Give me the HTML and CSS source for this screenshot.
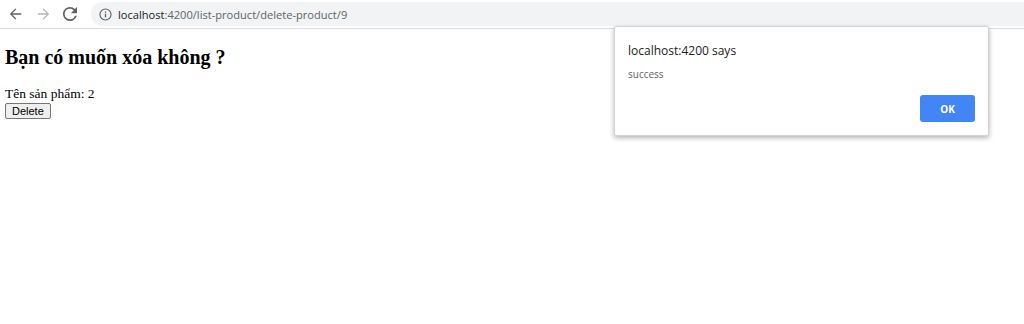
FILE: index.html
```html
<!DOCTYPE html>
<html lang="vi">
<head>
    <meta charset="UTF-8">
    <title>Delete product</title>
    <link rel="stylesheet" href="styles.css">
</head>
<body>
    <div class="toolbar">
        <span class="nav-btn">
            <svg width="14" height="14" viewBox="0 0 16 16"><path d="M14 7.2H3.9l4.5-4.5L7.3 1.6 1 8l6.3 6.4 1.1-1.1L3.9 8.8H14z" fill="#5f6368"/></svg>
        </span>
        <span class="nav-btn">
            <svg width="14" height="14" viewBox="0 0 16 16"><path d="M2 7.2h10.1L7.6 2.7l1.1-1.1L15 8l-6.3 6.4-1.1-1.1 4.5-4.5H2z" fill="#b4b7bb"/></svg>
        </span>
        <span class="nav-btn">
            <svg width="14" height="14" viewBox="0 0 16 16"><path d="M13.6 2.4A7.9 7.9 0 0 0 8 0a8 8 0 1 0 7.7 10h-2.1A6 6 0 1 1 8 2c1.7 0 3.1.7 4.2 1.8L9 7h7V0z" fill="#5f6368"/></svg>
        </span>
        <div class="omnibox">
            <svg width="13" height="13" viewBox="0 0 16 16"><circle cx="8" cy="8" r="6.8" fill="none" stroke="#5f6368" stroke-width="1.4"/><rect x="7.2" y="7" width="1.6" height="4.6" fill="#5f6368"/><rect x="7.2" y="4.2" width="1.6" height="1.6" fill="#5f6368"/></svg>
            <span class="url"><span class="host">localhost</span>:4200/list-product/delete-product/9</span>
        </div>
    </div>

    <div class="page">
        <h2 class="title">Bạn có muốn xóa không ?</h2>
        <div>Tên sản phẩm: 2</div>
        <button class="delete-btn">Delete</button>
    </div>

    <div class="dialog">
        <div class="dialog-title">localhost:4200 says</div>
        <div class="dialog-msg">success</div>
        <div class="dialog-actions">
            <button class="ok-btn">OK</button>
        </div>
    </div>
</body>
</html>
```

FILE: styles.css
```css
body {
    margin: 0;
    font-family: "Liberation Serif", serif;
    font-size: 13.5px;
    color: #000;
    background: #fff;
}
.toolbar {
    height: 29px;
    border-bottom: 1px solid #dadce0;
    display: flex;
    align-items: center;
    padding-left: 9px;
    box-sizing: border-box;
}
.nav-btn {
    width: 27px;
    display: flex;
    align-items: center;
    justify-content: flex-start;
}
.omnibox {
    flex: 1;
    height: 24px;
    margin-left: 1px;
    background: #f1f3f4;
    border-radius: 12px 0 0 12px;
    display: flex;
    align-items: center;
    padding-left: 8px;
    font-family: "Open Sans", sans-serif;
    font-size: 11.1px;
    color: #5f6368;
}
.url {
    margin-left: 6px;
}
.host {
    color: #202124;
}
.page {
    padding: 0 5px;
}
.title {
    font-size: 20px;
    margin: 17px 0 17px;
}
.delete-btn {
    font-family: "Liberation Sans", Arial, sans-serif;
    font-size: 11px;
    height: 16px;
    padding: 0 6px;
    margin: 1px 0 0;
    border: 1px solid #767676;
    border-radius: 2px;
    background: #efefef;
}
.dialog {
    position: absolute;
    left: 614px;
    top: 26px;
    width: 375px;
    height: 110px;
    box-sizing: border-box;
    background: #fff;
    border: 1px solid #d3d3d3;
    border-radius: 2px;
    box-shadow: 0 2px 5px rgba(0, 0, 0, 0.3);
    padding: 15px 13px 0 13px;
    font-family: "Open Sans", sans-serif;
}
.dialog-title {
    font-size: 12px;
    color: #202124;
}
.dialog-msg {
    font-size: 10px;
    color: #5f6368;
    margin-top: 8px;
}
.dialog-actions {
    display: flex;
    justify-content: flex-end;
    margin-top: 14px;
}
.ok-btn {
    width: 55px;
    height: 27px;
    background: #4285f4;
    color: #fff;
    border: none;
    border-radius: 3px;
    font-family: "Open Sans", sans-serif;
    font-size: 10px;
    font-weight: bold;
}
```
